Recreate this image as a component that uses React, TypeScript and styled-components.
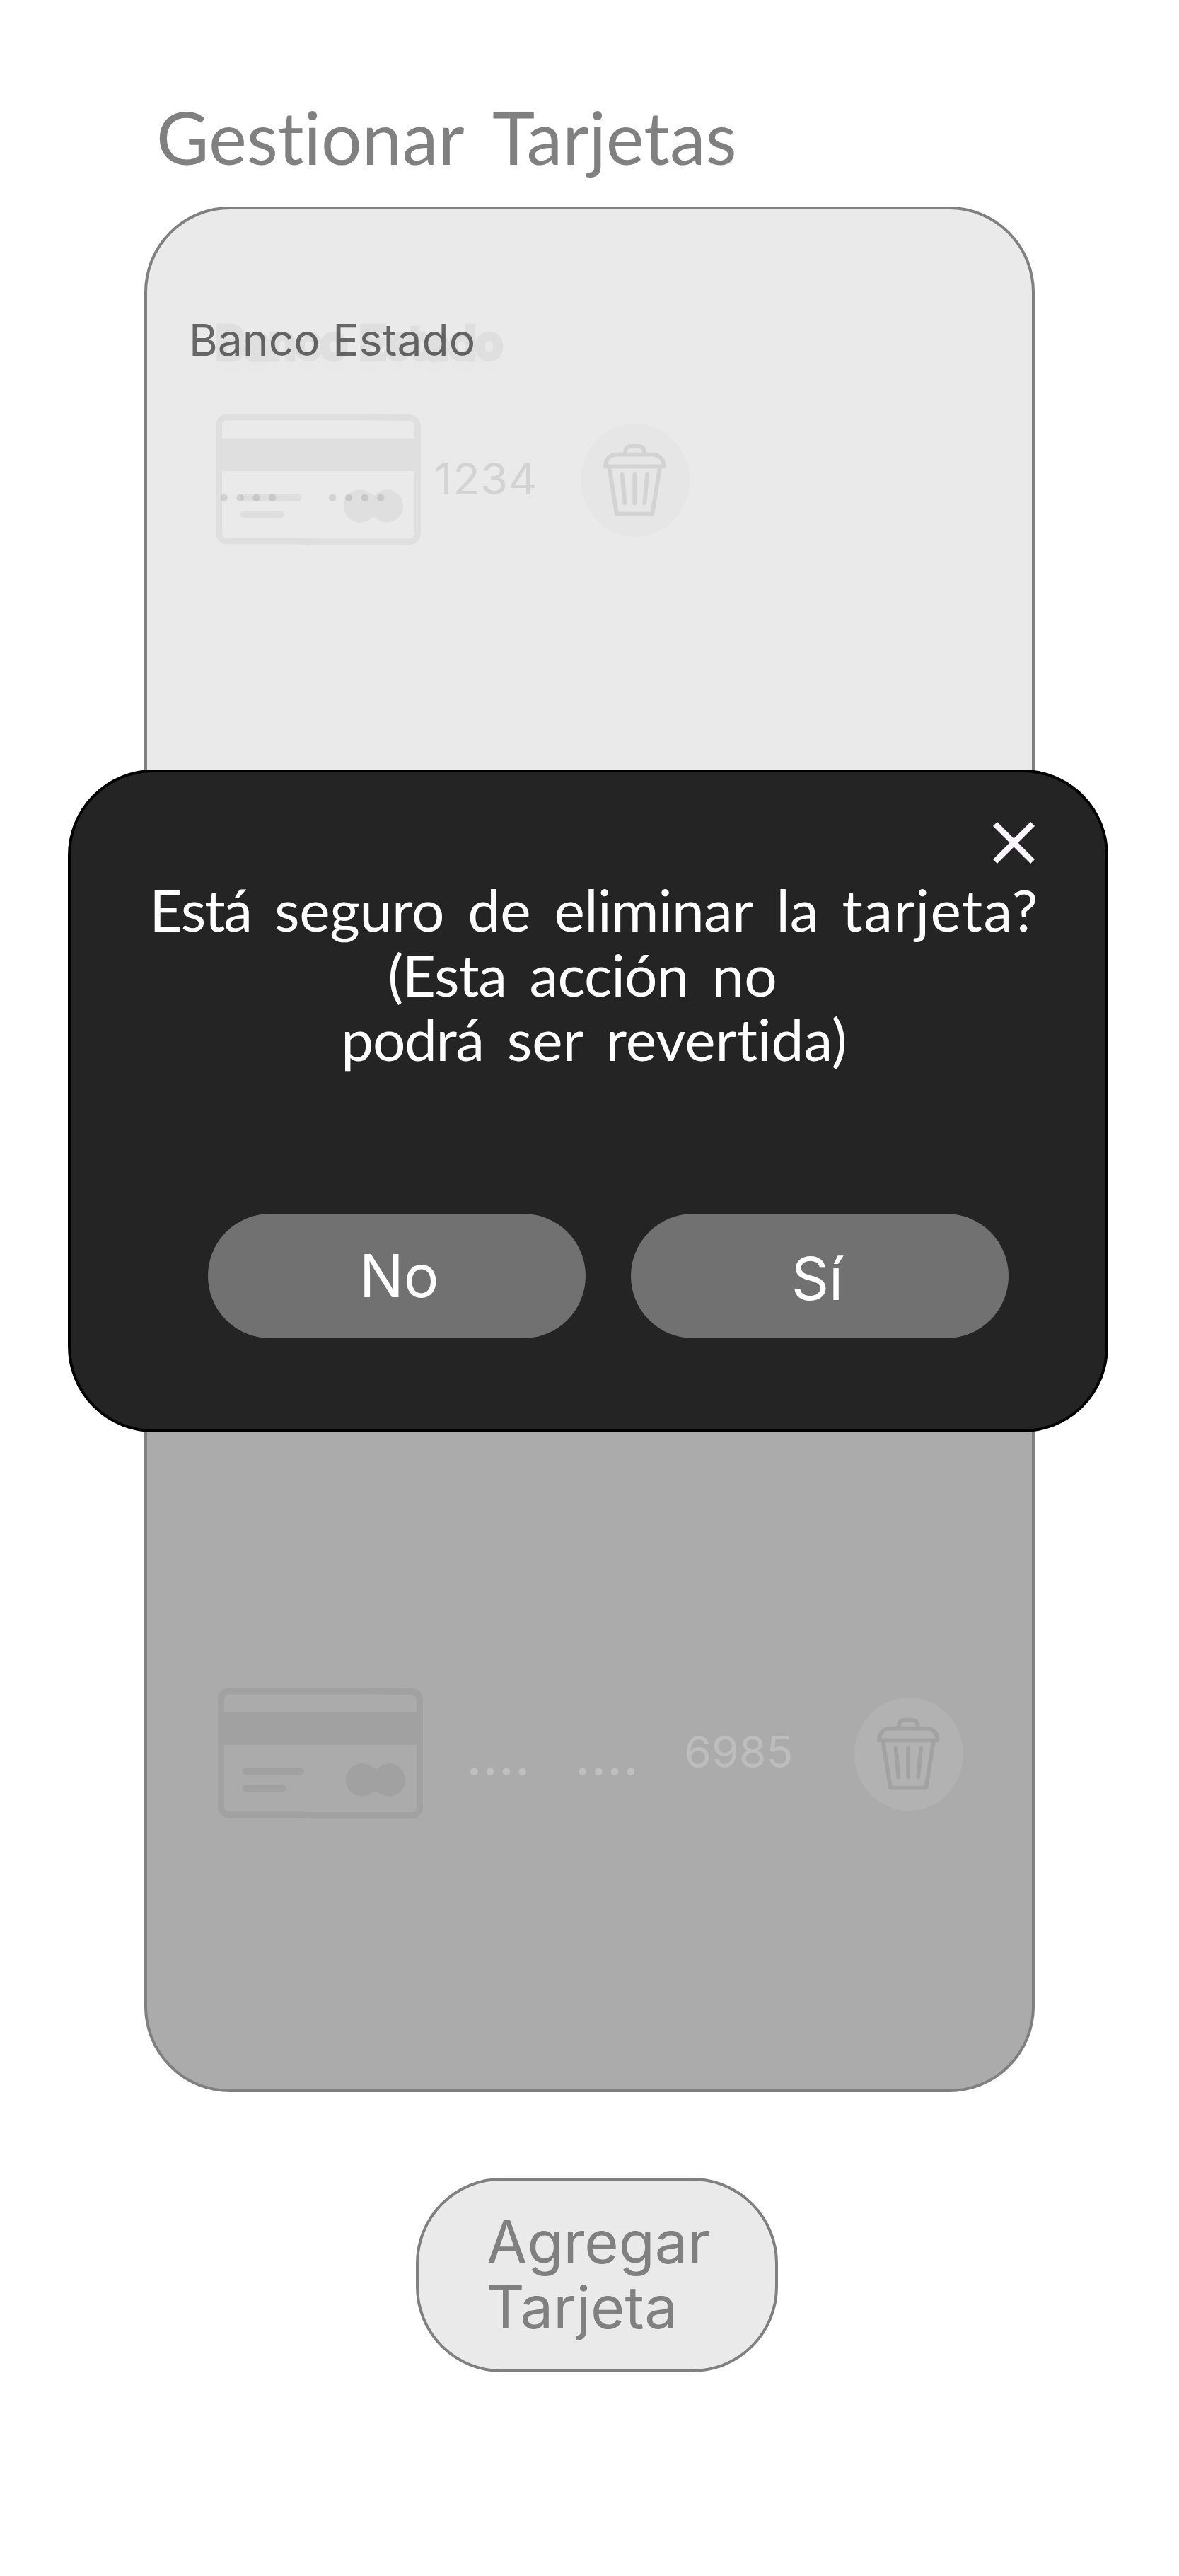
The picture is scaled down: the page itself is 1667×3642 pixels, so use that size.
import React from "react";
import styled, { createGlobalStyle } from "styled-components";

const GlobalStyle = createGlobalStyle`
  *, *::before, *::after { box-sizing: border-box; }
  body { margin: 0; background: #fff; }
`;

const sans = `Inter, "Liberation Sans", sans-serif`;
const display = `Lato, "Open Sans", sans-serif`;

const Page = styled.main`
  position: relative;
  width: 1667px;
  height: 3642px;
  padding: 133px 0 0 204px;
  overflow: hidden;
  background: #fff;
  font-family: ${sans};
`;

const Title = styled.h1`
  margin: 0 0 37px 17px;
  font: 400 102px/122px ${display};
  font-variant-ligatures: none;
  word-spacing: 18.5px;
  color: #808080;
  white-space: nowrap;
`;

const Panel = styled.section`
  display: flex;
  flex-direction: column;
  width: 1259px;
  height: 2666px;
  border: 4px solid #808080;
  border-radius: 121px;
  overflow: hidden;
  background: linear-gradient(#eaeaea 50%, #ababab 50%);
`;

const Slot = styled.article<{ $top: number }>`
  flex: 1 1 50%;
  padding-top: ${(p) => p.$top}px;
`;

const BankName = styled.h2`
  position: relative;
  margin: 0 0 66px 59px;
  font: 400 62.4px/76px ${sans};
  color: rgba(0, 0, 0, 0.56);
  white-space: nowrap;
`;

const NameText = styled.span`
  position: relative;
`;

const NameHalo = styled.span`
  position: absolute;
  left: 38px;
  top: 4px;
  color: #dfdfdf;
  -webkit-text-stroke: 8.6px #dfdfdf;
  text-shadow: 0 17px 14px rgba(0, 0, 0, 0.02);
`;

const CardRow = styled.div<{ $indent: number }>`
  position: relative;
  display: flex;
  align-items: flex-start;
  padding-left: ${(p) => p.$indent}px;
`;

const CardDrawing = styled.svg<{ $gap: number }>`
  display: block;
  flex: none;
  width: 290px;
  height: 186px;
  margin-right: ${(p) => p.$gap}px;
`;

const Dots = styled.span<{ $color: string; $over?: boolean }>`
  flex: none;
  width: 308.5px;
  margin-top: 56px;
  font-size: 79px;
  line-height: 76px;
  word-spacing: 40px;
  white-space: nowrap;
  color: ${(p) => p.$color};
  ${(p) => p.$over && `position: absolute; left: 97.5px; top: 0;`}
`;

const Digits = styled.span<{ $color: string; $width: number; $spacing: number }>`
  flex: none;
  width: ${(p) => p.$width}px;
  margin-top: 53.6px;
  font-size: 62.4px;
  line-height: 76px;
  letter-spacing: ${(p) => p.$spacing}px;
  color: ${(p) => p.$color};
`;

const TrashButton = styled.button<{ $bg: string; $ink: string }>`
  flex: none;
  width: 154px;
  height: 160px;
  margin: 14px 0 0;
  padding: 0;
  border: 0;
  border-radius: 50%;
  background: ${(p) => p.$bg};
  color: ${(p) => p.$ink};

  svg { display: block; width: 154px; height: 160px; }
`;

const AddButton = styled.button`
  display: block;
  width: 512px;
  height: 275px;
  margin: 121px 0 0 384px;
  padding: 0 0 2px 96px;
  border: 4px solid #808080;
  border-radius: 121px;
  background: #eaeaea;
  color: #808080;
  font: 400 83.2px/91.5px ${sans};
  text-align: left;
`;

const Dialog = styled.div`
  position: absolute;
  left: 96px;
  top: 1088px;
  width: 1471px;
  height: 937px;
  padding-top: 70px;
  border: 4px solid #000;
  border-radius: 121px;
  background: #242424;
  color: #fff;
`;

const DialogHeader = styled.div`
  display: flex;
  justify-content: flex-end;
  padding-right: 100px;
`;

const CloseButton = styled.button`
  padding: 0;
  border: 0;
  background: none;
  color: #fef7ff;

  svg { display: block; width: 59px; height: 59px; }
`;

const Message = styled.p`
  margin: 19px 0 201px;
  padding-left: 17px;
  font: 400 82px/91.67px ${display};
  font-variant-ligatures: none;
  word-spacing: 12px;
  text-align: center;
  white-space: nowrap;
`;

const Track = styled.span<{ $by: number }>`
  letter-spacing: ${(p) => p.$by}px;
`;

const Actions = styled.div`
  display: flex;
  gap: 64px;
  padding-left: 193.5px;
`;

const Action = styled.button<{ $pad: string }>`
  width: 534px;
  height: 176px;
  padding: ${(p) => p.$pad};
  border: 0;
  border-radius: 88px;
  background: #717171;
  color: #fff;
  font: 400 83.2px/91.5px ${sans};
`;

function CreditCard({ color, gap }: { color: string; gap: number }) {
  return (
    <CardDrawing $gap={gap} viewBox="0 0 290 186" fill={color}>
      <path
        d="M4.5 18 Q4.5 4.7 18 4.7 H204 L272 5.5 Q285.5 5.5 285.5 19 V167 Q285.5 181 272 181 H150 L110 180 H18 Q4.5 180 4.5 167 Z"
        fill="none"
        stroke={color}
        strokeWidth="9"
      />
      <rect x="4" y="34.6" width="282" height="46.4" />
      <rect x="35" y="113" width="86.5" height="10.4" rx="5.2" />
      <rect x="35" y="137" width="61.5" height="10.4" rx="5.2" />
      <circle cx="204" cy="130.5" r="23.2" />
      <circle cx="242" cy="130.5" r="23.2" />
      <path d="M221 113 L225 116 V145 L221 148 Z" />
    </CardDrawing>
  );
}

function Trash({ bg, ink }: { bg: string; ink: string }) {
  return (
    <TrashButton $bg={bg} $ink={ink} aria-label="Eliminar">
      <svg
        viewBox="0 0 462 480"
        fill="none"
        stroke="currentColor"
        strokeWidth="17.5"
        strokeLinecap="round"
        strokeLinejoin="round"
      >
        <path d="M189 124 V120 Q191 96 212 96 H246 Q268 96 269 120 V124" />
        <path d="M105 181 C105 150 125 131 155 131 H303 C333 131 353 150 353 181 Z" />
        <path d="M122 190 L153 383 H304 L335 190" />
        <path d="M176 216 L187 337 M228.5 216 V337 M282 216 L271 337" />
      </svg>
    </TrashButton>
  );
}

export default function App() {
  return (
    <>
      <GlobalStyle />
      <Page>
        <Title>Gestionar Tarjetas</Title>
        <Panel>
          <Slot $top={147}>
            <BankName>
              <NameHalo aria-hidden="true">Banco Estado</NameHalo>
              <NameText>Banco Estado</NameText>
            </BankName>
            <CardRow $indent={96.5}>
              <CreditCard color="#dfdfdf" gap={19.5} />
              <Dots $color="rgba(0, 0, 0, 0.1)" $over>.... ....</Dots>
              <Digits $color="#d3d3d3" $width={207} $spacing={1}>1234</Digits>
              <Trash bg="#e6e6e6" ink="#d3d3d3" />
            </CardRow>
          </Slot>
          <Slot $top={760.7}>
            <CardRow $indent={100}>
              <CreditCard color="#a1a1a1" gap={61} />
              <Dots $color="#bfbfbf">.... ....</Dots>
              <Digits $color="#bdbdbd" $width={240.5} $spacing={0}>6985</Digits>
              <Trash bg="#b2b2b2" ink="#a2a2a2" />
            </CardRow>
          </Slot>
        </Panel>
        <AddButton>
          Agregar
          <br />
          Tarjeta
        </AddButton>

        <Dialog role="dialog">
          <DialogHeader>
            <CloseButton aria-label="Cerrar">
              <svg viewBox="5 5 14 14" fill="currentColor">
                <path d="M19 6.41 17.59 5 12 10.59 6.41 5 5 6.41 10.59 12 5 17.59 6.41 19 12 13.41 17.59 19 19 17.59 13.41 12z" />
              </svg>
            </CloseButton>
          </DialogHeader>
          <Message>
            <Track $by={-2.2}>Está</Track> <Track $by={-0.25}>seguro</Track> de{" "}
            <Track $by={-0.6}>eliminar</Track> la <Track $by={1.3}>tarjeta?</Track>
            <br />
            <Track $by={-1.4}>(Esta</Track> <Track $by={-0.9}>acción</Track> no{"\u00a0"}
            <br />
            <Track $by={-1.4}>podrá</Track> ser revertida)
          </Message>
          <Actions>
            <Action $pad="0 0 0 7.5px">No</Action>
            <Action $pad="8px 6px 0 0">Sí</Action>
          </Actions>
        </Dialog>
      </Page>
    </>
  );
}
